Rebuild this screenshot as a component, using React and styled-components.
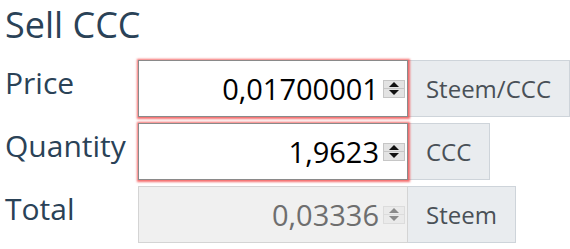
import React from "react";
import styled, { createGlobalStyle } from "styled-components";

const GlobalStyles = createGlobalStyle`
  body {
    margin: 0;
    background: #fff;
    font-family: "Open Sans", "Liberation Sans", sans-serif;
  }
`;

const Page = styled.div`
  width: 570px;
  height: 249px;
  overflow: hidden;
  padding: 0 0 0 5px;
  box-sizing: border-box;
`;

const Title = styled.h2`
  margin: 0 0 11px 0;
  font-size: 36px;
  font-weight: 400;
  line-height: 49px;
  color: #2a4257;
`;

const Form = styled.div`
  display: flex;
  flex-direction: column;
  gap: 6px;
`;

const Row = styled.div`
  display: flex;
  align-items: flex-start;
  height: 57px;
`;

const Label = styled.label`
  width: 133px;
  padding-top: 3px;
  font-size: 30px;
  line-height: 40px;
  color: #2a4257;
`;

const Group = styled.div`
  display: flex;
  align-items: stretch;
  height: 100%;
`;

const Field = styled.div`
  width: 270px;
  box-sizing: border-box;
  display: flex;
  align-items: center;
  padding: 0 2px 0 6px;
  border: 1px solid ${(p) => (p.disabled ? "#d4d4d4" : "#8a8a8a")};
  background: ${(p) => (p.disabled ? "#f0f0f0" : "#fff")};
  box-shadow: ${(p) => (p.invalid ? "0 0 2px 1.5px rgba(240, 60, 60, 0.75)" : "none")};
  position: relative;
  z-index: 1;
`;

const NumberText = styled.input`
  flex: 1;
  min-width: 0;
  border: none;
  outline: none;
  background: transparent;
  text-align: right;
  font-family: inherit;
  font-size: 29px;
  padding: 0;
  color: ${(p) => (p.disabled ? "#6e6e6e" : "#000")};
`;

const Spinner = styled.div`
  flex: 0 0 22px;
  height: 18px;
  margin-left: 4px;
  display: flex;
  flex-direction: column;
  opacity: ${(p) => (p.disabled ? 0.45 : 1)};
`;

const SpinHalf = styled.div`
  flex: 1;
  display: flex;
  align-items: center;
  justify-content: center;
  background: #e3e3e3;
  border: 1px solid #c6c6c6;
  border-top-width: ${(p) => (p.down ? "0" : "1px")};
`;

const Addon = styled.div`
  display: flex;
  align-items: center;
  padding: 0 18px;
  background: #e9ecef;
  border: 1px solid #ced4da;
  border-left: none;
  font-size: 24px;
  color: #495057;
`;

function Arrow({ down }) {
  return (
    <svg width="10" height="5" viewBox="0 0 10 5">
      <path d={down ? "M0 0 L10 0 L5 5 Z" : "M0 5 L10 5 L5 0 Z"} fill="#111" />
    </svg>
  );
}

function NumberField({ value, unit, invalid, disabled }) {
  return (
    <Group>
      <Field invalid={invalid} disabled={disabled}>
        <NumberText type="text" defaultValue={value} disabled={disabled} readOnly />
        <Spinner disabled={disabled}>
          <SpinHalf>
            <Arrow />
          </SpinHalf>
          <SpinHalf down>
            <Arrow down />
          </SpinHalf>
        </Spinner>
      </Field>
      <Addon>{unit}</Addon>
    </Group>
  );
}

export default function App() {
  return (
    <>
      <GlobalStyles />
      <Page>
        <Title>Sell CCC</Title>
        <Form>
          <Row>
            <Label>Price</Label>
            <NumberField value="0,01700001" unit="Steem/CCC" invalid />
          </Row>
          <Row>
            <Label>Quantity</Label>
            <NumberField value="1,9623" unit="CCC" invalid />
          </Row>
          <Row>
            <Label>Total</Label>
            <NumberField value="0,03336" unit="Steem" disabled />
          </Row>
        </Form>
      </Page>
    </>
  );
}
